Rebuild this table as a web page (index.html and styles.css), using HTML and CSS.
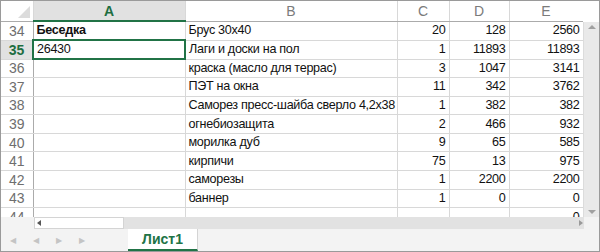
FILE: index.html
```html
<!DOCTYPE html>
<html lang="ru">
<head>
  <meta charset="UTF-8" />
  <meta name="viewport" content="width=device-width, initial-scale=1" />
  <title>Беседка</title>
  <link rel="stylesheet" href="styles.css">
</head>
<body>
  <div class="window">
    <div class="main">
      <div class="sheet">
        <table class="grid">
          <colgroup>
            <col class="c-num">
            <col class="c-a">
            <col class="c-b">
            <col class="c-c">
            <col class="c-d">
            <col class="c-e">
          </colgroup>
          <thead>
            <tr>
              <th class="corner"><span class="corner-mark"></span></th>
              <th class="col-head active">A</th>
              <th class="col-head">B</th>
              <th class="col-head">C</th>
              <th class="col-head">D</th>
              <th class="col-head">E</th>
            </tr>
          </thead>
          <tbody id="rows">
            <!-- rows are rendered by the script below -->
          </tbody>
        </table>
      </div>
      <div class="vscroll">
        <span class="arrow up"></span>
        <span class="arrow down"></span>
      </div>
    </div>

    <div class="hscroll">
      <div class="hs-gap"></div>
      <div class="hs-box"><span class="hs-left"></span></div>
      <div class="hs-track"><span class="hs-right"></span></div>
    </div>

    <div class="tabs">
      <div class="nav">
        <span>&#9664;</span>
        <span>&#9664;</span>
        <span>&#9654;</span>
        <span>&#9654;</span>
      </div>
      <div class="tab">Лист1</div>
    </div>
  </div>

  <script>
    // --- Sheet data, rows 34..44 ---
    const rows = [
      { n: 34, a: "Беседка", b: "Брус 30х40", c: 20, d: 128, e: 2560 },
      { n: 35, a: "26430", b: "Лаги и доски на пол", c: 1, d: 11893, e: 11893 },
      { n: 36, a: "", b: "краска (масло для террас)", c: 3, d: 1047, e: 3141 },
      { n: 37, a: "", b: "ПЭТ на окна", c: 11, d: 342, e: 3762 },
      { n: 38, a: "", b: "Саморез пресс-шайба сверло 4,2х38", c: 1, d: 382, e: 382 },
      { n: 39, a: "", b: "огнебиозащита", c: 2, d: 466, e: 932 },
      { n: 40, a: "", b: "морилка дуб", c: 9, d: 65, e: 585 },
      { n: 41, a: "", b: "кирпичи", c: 75, d: 13, e: 975 },
      { n: 42, a: "", b: "саморезы", c: 1, d: 2200, e: 2200 },
      { n: 43, a: "", b: "баннер", c: 1, d: 0, e: 0 },
      { n: 44, a: "", b: "", c: "", d: "", e: 0 },
    ];

    const activeRow = 35;
    const body = document.getElementById("rows");

    rows.forEach(r => {
      const tr = document.createElement("tr");
      const isActive = r.n === activeRow;
      tr.innerHTML = `
        <th class="row-head${isActive ? " active" : ""}">${r.n}</th>
        <td class="${isActive ? "selected" : ""}${r.n === 34 ? " bold" : ""}">${r.a}</td>
        <td>${r.b}</td>
        <td class="num">${r.c}</td>
        <td class="num">${r.d}</td>
        <td class="num">${r.e}</td>
      `;
      body.appendChild(tr);
    });
  </script>
</body>
</html>
```

FILE: styles.css
```css
* {
  box-sizing: border-box;
}
body {
  margin: 0;
  font-family: "Liberation Sans", Arial, sans-serif;
  background: #fff;
  color: #000;
}
.window {
  width: 600px;
  height: 252px;
  border: 1px solid #9a9a9a;
  overflow: hidden;
  display: flex;
  flex-direction: column;
}
.main {
  display: flex;
  height: 216px;
}
.sheet {
  flex: 1;
  overflow: hidden;
}
.grid {
  border-collapse: collapse;
  table-layout: fixed;
  width: 582px;
  font-size: 13px;
}
.c-num { width: 32px; }
.c-a { width: 152px; }
.c-b { width: 212px; }
.c-c { width: 52px; }
.c-d { width: 60px; }
.c-e { width: 74px; }

.grid th,
.grid td {
  border: 1px solid #d8d8d8;
  padding: 0 3px;
  white-space: nowrap;
  overflow: hidden;
}
.grid thead th {
  height: 20px;
  border-top: none;
  border-bottom: 1px solid #ababab;
  background: #fff;
  color: #7b7b7b;
  font-weight: normal;
  font-size: 14px;
}
.grid thead th.active {
  background: #e1e1e1;
  color: #1e6e41;
  font-weight: bold;
  border-bottom: 2px solid #217346;
}
.corner {
  position: relative;
  border-left: none !important;
}
.corner-mark {
  position: absolute;
  right: 3px;
  bottom: 3px;
  width: 0;
  height: 0;
  border-left: 12px solid transparent;
  border-bottom: 12px solid #dcdcdc;
}
.grid tbody tr {
  height: 18.6px;
}
.grid td {
  line-height: 17px;
  font-size: 12.6px;
  letter-spacing: -0.3px;
  color: #111;
}
.row-head {
  border-left: none !important;
  border-right: 1px solid #ababab !important;
  background: #fff;
  color: #6e6e6e;
  font-weight: normal;
  font-size: 14px;
  text-align: center;
}
.row-head.active {
  background: #e1e1e1;
  color: #1e6e41;
  font-weight: bold;
}
.grid td.selected {
  border: 2px solid #217346;
}
.grid td.bold {
  font-weight: bold;
}
.num {
  text-align: right;
}

/* vertical scroll bar */
.vscroll {
  width: 16px;
  margin-top: 21px;
  background: #e9e9e9;
  border-left: 1px solid #dcdcdc;
  display: flex;
  flex-direction: column;
  justify-content: space-between;
  align-items: center;
}
.arrow {
  width: 0;
  height: 0;
  border-left: 4px solid transparent;
  border-right: 4px solid transparent;
  margin: 3px 0;
}
.arrow.up {
  border-bottom: 4px solid #a0a0a0;
}
.arrow.down {
  border-top: 4px solid #a0a0a0;
}

/* horizontal scroll bar */
.hscroll {
  display: flex;
  height: 12px;
  background: #f3f3f3;
}
.hs-gap {
  width: 33px;
}
.hs-box {
  width: 90px;
  background: #fff;
  border: 1px solid #d4d4d4;
  display: flex;
  align-items: center;
  padding-left: 2px;
}
.hs-left {
  width: 0;
  height: 0;
  border-top: 3px solid transparent;
  border-bottom: 3px solid transparent;
  border-right: 4px solid #555;
}
.hs-track {
  width: 460px;
  background: #e2e2e2;
  display: flex;
  align-items: center;
  justify-content: flex-end;
  padding-right: 1px;
}
.hs-right {
  width: 0;
  height: 0;
  border-top: 3px solid transparent;
  border-bottom: 3px solid transparent;
  border-left: 4px solid #9a9a9a;
}

/* sheet tabs */
.tabs {
  flex: 1;
  display: flex;
  background: #f3f3f3;
}
.nav {
  width: 127px;
  display: flex;
  align-items: center;
  gap: 17px;
  padding-left: 9px;
  color: #c4c4c4;
  font-size: 8px;
}
.tab {
  width: 70px;
  background: #fff;
  border-bottom: 2px solid #217346;
  border-right: 1px solid #d4d4d4;
  color: #217346;
  font-weight: bold;
  font-size: 14px;
  display: flex;
  align-items: center;
  justify-content: center;
}
```
